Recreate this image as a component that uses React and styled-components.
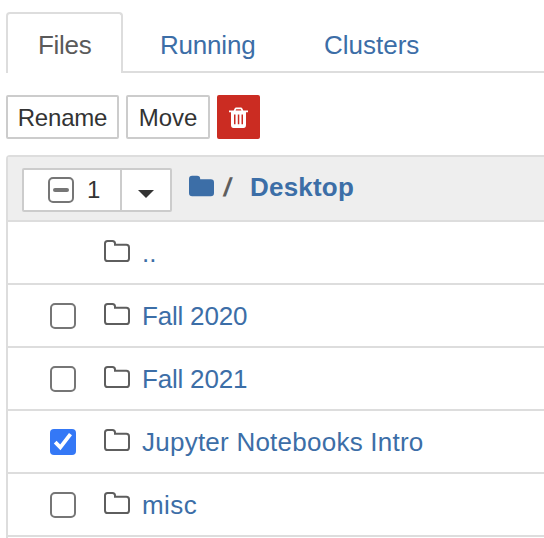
import React from "react";
import styled, { createGlobalStyle } from "styled-components";

const BLUE = "#3c6ea7";
const LINE = "#dddddd";

const GlobalStyle = createGlobalStyle`
  * { box-sizing: border-box; }
  body { margin: 0; background: #fff; overflow: hidden; }
`;

const Page = styled.main`
  width: 544px;
  height: 538px;
  overflow: hidden;
  padding: 12px 0 0 6px;
  color: #5e5e5e;
  font-family: "Liberation Sans", Arial, Helvetica, sans-serif;
  font-size: 26px;
`;

const Tabs = styled.nav`
  display: flex;
  height: 61px;
  border-bottom: 2px solid ${LINE};
`;

const Tab = styled.a`
  height: 61px;
  width: ${(p) => p.$width}px;
  margin-right: ${(p) => (p.$active ? 6 : 0)}px;
  padding: 0 0 0 ${(p) => (p.$active ? 30 : 29)}px;
  line-height: 62px;
  white-space: nowrap;
  letter-spacing: ${(p) => p.$spacing || 0}px;
  color: ${(p) => (p.$active ? "#5a5a5a" : BLUE)};
  border: 2px solid ${(p) => (p.$active ? LINE : "transparent")};
  border-bottom: 0;
  border-radius: 4px 4px 0 0;
  background: ${(p) => (p.$active ? "#fff" : "transparent")};
`;

const Toolbar = styled.div`
  display: flex;
  gap: 7px;
  margin-top: 22px;
`;

const Button = styled.button`
  display: flex;
  align-items: center;
  justify-content: center;
  width: ${(p) => p.$width}px;
  height: 44px;
  padding: ${(p) => (p.$danger ? 1 : 2)}px 0 0;
  font: 24px/38px "Liberation Sans", Arial, Helvetica, sans-serif;
  letter-spacing: ${(p) => p.$spacing || 0}px;
  color: ${(p) => (p.$danger ? "#fff" : "#333")};
  background: ${(p) => (p.$danger ? "#cb2c22" : "#fff")};
  border: 2px solid ${(p) => (p.$danger ? "#cb2c22" : "#cccccc")};
  border-radius: 2px;
`;

const FileList = styled.section`
  margin-top: 16px;
  border: 2px solid ${LINE};
  border-width: 2px 0 0 2px;
  border-radius: 4px 0 0 0;
`;

const ListHeader = styled.header`
  display: flex;
  height: 63px;
  padding: 11px 0 0 14px;
  background: #eeeeee;
`;

const SelectGroup = styled.div`
  display: flex;
  width: 150px;
  height: 44px;
  background: #fff;
  border: 2px solid #cccccc;
  border-radius: 2px;
  color: #333;
`;

const SelectAll = styled.div`
  display: flex;
  align-items: center;
  width: 96px;
  padding-left: 24px;
`;

const Count = styled.span`
  margin-left: 13px;
  font-size: 24px;
  line-height: 40px;
`;

const Toggle = styled.div`
  display: flex;
  flex: 1;
  align-items: center;
  justify-content: center;
  padding-top: 8px;
  border-left: 2px solid #cccccc;
`;

const Breadcrumb = styled.div`
  display: flex;
  height: 40px;
  padding-left: 17px;
  font-weight: bold;
  line-height: 38px;
`;

const HomeIcon = styled.svg`
  width: 25px;
  height: 22px;
  margin-top: 7px;
  flex: none;
`;

const Slash = styled.span`
  width: 26px;
  margin-left: 10px;
`;

const SlashGlyph = styled.span`
  display: inline-block;
  transform: skewX(-10deg);
`;

const Current = styled.a`
  letter-spacing: 0.2px;
  color: ${BLUE};
`;

const Row = styled.div`
  display: flex;
  align-items: center;
  height: 63px;
  border-top: 2px solid ${LINE};
`;

const CheckSlot = styled.div`
  width: 96px;
  padding-left: 42px;
  height: 26px;
`;

const Svg = styled.svg`
  display: block;
  flex: none;
`;

const FolderIcon = styled(Svg)`
  margin-bottom: 3px;
`;

const Name = styled.a`
  margin-left: 12px;
  line-height: 60px;
  padding-top: 1px;
  white-space: nowrap;
  letter-spacing: ${(p) => p.$spacing || 0}px;
  color: ${BLUE};
`;

function Checkbox({ state }) {
  if (state === "checked") {
    return (
      <Svg width="26" height="26" viewBox="0 0 26 26">
        <rect width="26" height="26" rx="4" fill="#3478f6" />
        <path d="M5.2 13.2 10.3 18.4 20.5 5.2" fill="none" stroke="#fff" strokeWidth="3.8" />
      </Svg>
    );
  }
  return (
    <Svg width="26" height="26" viewBox="0 0 26 26">
      <rect x="1" y="1" width="24" height="24" rx="4" fill="#fff" stroke="#767676" strokeWidth="2" />
      {state === "mixed" && <rect x="5" y="11" width="16" height="4" rx="2" fill="#767676" />}
    </Svg>
  );
}

function Folder() {
  return (
    <FolderIcon width="26" height="22" viewBox="0 0 26 22">
      <path
        d="M1 3.6Q1 1 3.6 1H8.4Q11 1 11 3.6V4.8H22.4Q25 4.8 25 7.4V18.4Q25 21 22.4 21H3.6Q1 21 1 18.4Z"
        fill="none"
        stroke="#5e5e5e"
        strokeWidth="2"
      />
    </FolderIcon>
  );
}

function Trash() {
  return (
    <Svg width="19" height="22" viewBox="0 0 19 22">
      <path
        fill="#fff"
        fillRule="evenodd"
        d="M0 3.6H4.7L5.5 1.7Q6 .6 7.2.6H11.8Q13 .6 13.5 1.7L14.3 3.6H19V5.3H17V17.8Q17 21 14.5 21H4.5Q2 21 2 17.8V5.3H0ZM6.6 3.6H12.4L11.8 2.2H7.2ZM5 7.4V17.2H6.5V7.4ZM8.8 7.4V17.2H10.3V7.4ZM12.5 7.4V17.2H14V7.4Z"
      />
    </Svg>
  );
}

const entries = [
  { name: ".." },
  { name: "Fall 2020", state: "empty", spacing: -0.2 },
  { name: "Fall 2021", state: "empty", spacing: -0.2 },
  { name: "Jupyter Notebooks Intro", state: "checked", spacing: 0.24 },
  { name: "misc", state: "empty", spacing: 0.4 },
  { name: "" },
];

export default function App() {
  return (
    <Page>
      <GlobalStyle />
      <Tabs>
        <Tab $active $width={117} $spacing={-0.3}>Files</Tab>
        <Tab $width={164} $spacing={-0.2}>Running</Tab>
        <Tab $width={160}>Clusters</Tab>
      </Tabs>
      <Toolbar>
        <Button $width={113} $spacing={-0.2}>Rename</Button>
        <Button $width={84}>Move</Button>
        <Button $width={43} $danger aria-label="Delete">
          <Trash />
        </Button>
      </Toolbar>
      <FileList>
        <ListHeader>
          <SelectGroup>
            <SelectAll>
              <Checkbox state="mixed" />
              <Count>1</Count>
            </SelectAll>
            <Toggle>
              <Svg width="16" height="8" viewBox="0 0 16 8">
                <path d="M0 0H16L8 8Z" fill="#333" />
              </Svg>
            </Toggle>
          </SelectGroup>
          <Breadcrumb>
            <HomeIcon viewBox="0 0 25 22">
              <path
                d="M0 4Q0 .8 3.2.8H8Q11.2.8 11.2 4V4.3H21.8Q25 4.3 25 7.5V18Q25 21.2 21.8 21.2H3.2Q0 21.2 0 18Z"
                fill={BLUE}
              />
            </HomeIcon>
            <Slash>
              <SlashGlyph>/</SlashGlyph>
            </Slash>
            <Current>Desktop</Current>
          </Breadcrumb>
        </ListHeader>
        {entries.map((entry, i) => (
          <Row key={i}>
            {entry.name && (
              <>
                <CheckSlot>{entry.state && <Checkbox state={entry.state} />}</CheckSlot>
                <Folder />
                <Name $spacing={entry.spacing}>{entry.name}</Name>
              </>
            )}
          </Row>
        ))}
      </FileList>
    </Page>
  );
}
